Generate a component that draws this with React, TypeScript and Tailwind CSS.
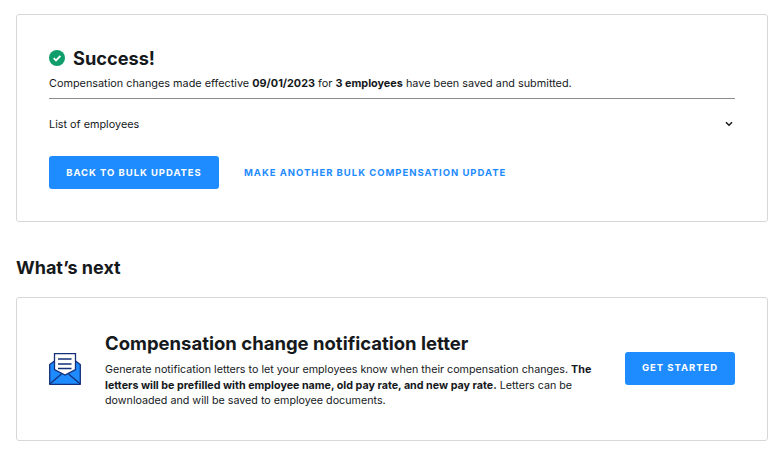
export default function App() {
  return (
    <div className="w-[782px] h-[456px] bg-white pl-4 pt-3.5 font-['Inter',sans-serif] text-[#15191c] overflow-hidden">
      <section className="w-[752px] h-[208px] border border-[#d5d7d9] rounded-[3px] px-8 pt-[31px]">
        <div className="flex items-center gap-2 h-[24px]">
          <svg width="16" height="16" viewBox="0 0 16 16" className="shrink-0">
            <circle cx="8" cy="8" r="8" fill="#0f9d6b" />
            <path d="M4.7 8.2 7 10.4 11.4 5.9" fill="none" stroke="#fff" strokeWidth="1.8" />
          </svg>
          <h1 className="text-[18.2px] leading-6 font-bold">Success!</h1>
        </div>
        <p className="mt-[5px] text-[10.85px] leading-[16px] whitespace-nowrap">
          Compensation changes made effective <b>09/01/2023</b> for <b>3 employees</b> have been saved and submitted.
        </p>
        <div className="mt-[7px] h-px bg-[#8a8c8e]" />
        <div className="flex items-center justify-between h-[50px] text-[10.85px]">
          <span>List of employees</span>
          <svg width="8" height="6" viewBox="0 0 8 6" className="mr-[2px]">
            <path d="M1 1.2 4 4.2 7 1.2" fill="none" stroke="#15191c" strokeWidth="1.5" />
          </svg>
        </div>
        <div className="flex items-center gap-[25px] mt-[7px]">
          <button className="w-[170px] h-[33px] pt-px rounded-[3px] bg-[#1e8bff] text-white text-[9.5px] font-bold tracking-[0.95px]">BACK TO BULK UPDATES</button>
          <a className="mt-[2px] text-[#1e8bff] text-[9.5px] font-bold tracking-[0.98px] whitespace-nowrap">MAKE ANOTHER BULK COMPENSATION UPDATE</a>
        </div>
      </section>
      <h2 className="text-[18px] leading-6 font-bold mt-[34px]">What’s next</h2>
      <section className="w-[752px] mt-[17px] h-[144px] border border-[#d5d7d9] rounded-[3px] pl-8 pr-8 flex items-center">
        <svg width="32" height="32" viewBox="0 0 32 32" className="shrink-0">
          <path d="M.7 11.5 5.5 8h21l4.8 3.5v19.8H.7Z" fill="#1e8bff" stroke="#14307a" strokeWidth="1.3" strokeLinejoin="round" />
          <path d="M5.5.7h21v15.8L16 22 5.5 16.5Z" fill="#fff" stroke="#14307a" strokeWidth="1.3" />
          <path d="M9 6h13.5M9 11h13.5M9 15.5h13.5" stroke="#14307a" strokeWidth="1.3" />
          <path d="M.7 31 12.5 21M31.3 31 19.5 21" fill="none" stroke="#14307a" strokeWidth="1.3" />
        </svg>
        <div className="ml-[24px] mt-[2px] w-[500px] shrink-0">
          <h3 className="text-[18.5px] leading-6 font-bold whitespace-nowrap">Compensation change notification letter</h3>
          <p className="mt-[7px] text-[10.72px] leading-[15.5px]">
            Generate notification letters to let your employees know when their compensation changes. <b>The letters will be prefilled with employee name, old pay rate, and new pay rate.</b> Letters can be downloaded and will be saved to employee documents.
          </p>
        </div>
        <button className="ml-auto -mt-[2px] w-[110px] h-[33px] pt-px rounded-[3px] bg-[#1e8bff] text-white text-[9.5px] font-bold tracking-[0.95px]">GET STARTED</button>
      </section>
    </div>
  );
}
